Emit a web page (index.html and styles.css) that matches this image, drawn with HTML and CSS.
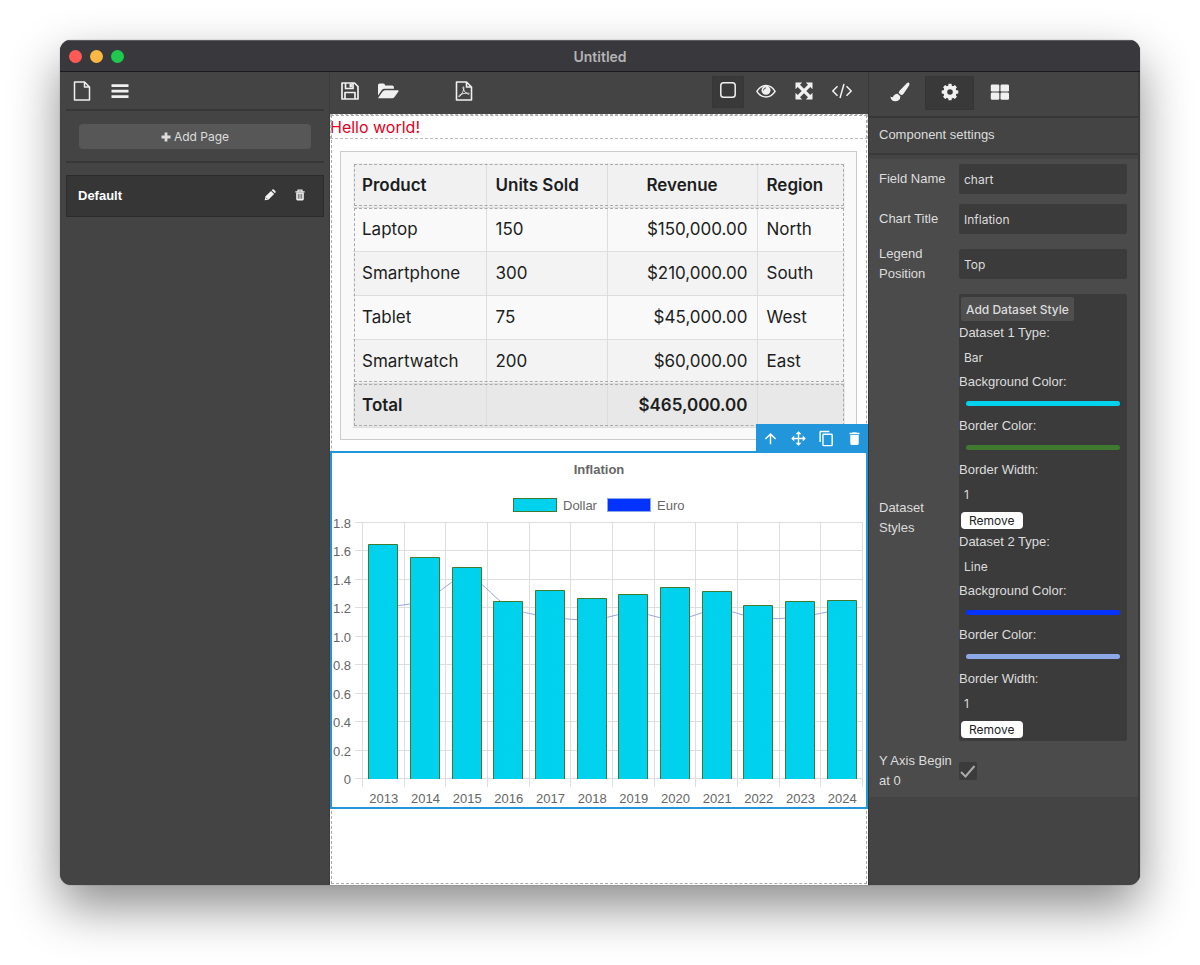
FILE: index.html
```html
<!DOCTYPE html>
<html lang="en">
<head>
  <meta charset="UTF-8">
  <meta name="viewport" content="width=device-width, initial-scale=1.0">
  <title>Untitled</title>
  <link rel="stylesheet" href="styles.css">
</head>
<body>
  <div class="window">
    <header class="titlebar">
      <div class="lights">
        <span class="light light-close"></span>
        <span class="light light-min"></span>
        <span class="light light-max"></span>
      </div>
      <h1>Untitled</h1>
    </header>

    <div class="editor">
      <!-- Pages -->
      <aside class="pages">
        <div class="pages-tools">
          <button class="tool" type="button" aria-label="New document">
            <svg class="icon" viewBox="0 0 20 20"><path d="M2.500 1h10l5 5v13h-15zM12.500 1v5h5" fill="none" stroke="currentColor" stroke-width="1.500" stroke-linejoin="round"/></svg>
          </button>
          <button class="tool" type="button" aria-label="Menu">
            <svg class="icon" viewBox="0 0 20 20"><path d="M1.500 3.200h17v2.900h-17zM1.500 8.700h17v2.900h-17zM1.500 14.200h17v2.900h-17z" fill="currentColor"/></svg>
          </button>
        </div>
        <div class="pages-add">
          <button class="add-page" type="button">
            <svg class="icon-tiny" viewBox="0 0 10 10"><path d="M3.600 .5h2.800v3.100h3.100v2.800H6.400v3.100H3.600V6.400H.5V3.600h3.100z" fill="currentColor"/></svg>
            Add Page
          </button>
        </div>
        <div class="page-item">
          <span class="page-name">Default</span>
          <button class="page-btn" type="button" aria-label="Rename page">
            <svg class="icon-small" viewBox="0 0 12 12"><path d="M.7 11.300l.6-3.700L7 1.900 10.100 5l-5.700 5.700zM7.700 1.200l.7-.7q.8-.5 1.400 0l1.700 1.700q.5.700 0 1.400l-.7.700z" fill="currentColor"/><path d="M1.900 8.700l1.500 1.500" stroke="#363636" stroke-width=".7"/></svg>
          </button>
          <button class="page-btn" type="button" aria-label="Delete page">
            <svg class="icon-small" viewBox="0 0 12 12"><path d="M4 2.500V1.200h4v1.300M1.300 2.900h9.400" fill="none" stroke="currentColor" stroke-width="1.200"/><path d="M2.200 3.500h7.600V10q0 1.400-1.200 1.400H3.400Q2.200 11.400 2.200 10z" fill="currentColor"/><path d="M4.300 4.800v5M6 4.800v5M7.700 4.800v5" stroke="#363636" stroke-width=".7"/></svg>
          </button>
        </div>
      </aside>

      <!-- Canvas -->
      <main class="stage">
        <div class="stage-tools">
          <button class="tool" type="button" aria-label="Save">
            <svg class="icon" viewBox="0 0 20 20"><g fill="none" stroke="currentColor" stroke-width="1.700" stroke-linejoin="round"><path d="M2 2h12.500L18 5.500V18H2zM5 18v-6.500h10V18"/><path d="M5.500 2v5.500h7.500V2"/></g><path d="M9.500 2.500h2.400v4H9.500z" fill="currentColor"/></svg>
          </button>
          <button class="tool" type="button" aria-label="Open">
            <svg class="icon icon-wide" viewBox="0 0 22 20"><path d="M1 14.500V4.200Q1 2.500 2.700 2.500h3.600Q8 2.500 8 4v.6h7.200q1.700 0 1.700 1.700v1.500H7.500q-1.700 0-2.800 1.400zM1.300 16.800l4.200-6q1-1.500 2.500-1.500h12.700q1.500 0 .6 1.400l-3.600 5q-1.100 1.500-2.600 1.500H2Q1 17.400 1.300 16.800z" fill="currentColor"/></svg>
          </button>
          <button class="tool tool-pdf" type="button" aria-label="Export PDF">
            <svg class="icon" viewBox="0 0 20 20"><g fill="none" stroke="currentColor" stroke-linejoin="round"><path d="M2.500 1h10l5 5v13h-15zM12.500 1v5h5" stroke-width="1.600"/><path d="M9.300 5.800q1 0 .5 2.200-.6 2.800-2.700 5.800-1.500 2.200-2.300 1.800-.6-.6 1-1.600 2.600-1.500 6.400-1.900 3-.2 3.100.7-.2.900-2-.1-3.100-1.500-4.100-5-.5-1.800.1-1.900z" stroke-width=".9"/></g></svg>
          </button>
          <span class="spacer"></span>
          <button class="tool tool-active" type="button" aria-label="View components">
            <svg class="icon" viewBox="0 0 20 20"><rect x="2.800" y="1.800" width="14.400" height="14.400" rx="2.800" fill="none" stroke="currentColor" stroke-width="1.500"/></svg>
          </button>
          <button class="tool" type="button" aria-label="Preview">
            <svg class="icon" viewBox="0 0 20 20"><path d="M.9 10.300Q4.500 4.600 10 4.600t9.100 5.700Q15.500 15.900 10 15.900T.9 10.300z" fill="none" stroke="currentColor" stroke-width="1.500"/><circle cx="10" cy="9.300" r="4.500" fill="currentColor"/><path d="M7.500 9.400q0-2.400 2.500-2.600" fill="none" stroke="#444" stroke-width=".9"/></svg>
          </button>
          <button class="tool" type="button" aria-label="Fullscreen">
            <svg class="icon" viewBox="0 0 20 20"><path d="M1.500 1.500h6.700L6 3.700l4 4 4-4-2.200-2.200h6.700v6.700L16.300 6l-4 4 4 4 2.200-2.200v6.700h-6.700l2.200-2.200-4-4-4 4 2.200 2.200H1.500v-6.700L3.700 14l4-4-4-4-2.200 2.200z" fill="currentColor"/></svg>
          </button>
          <button class="tool" type="button" aria-label="View code">
            <svg class="icon" viewBox="0 0 20 20"><path d="M5.500 5.200L.8 10l4.700 4.800M14.500 5.200l4.700 4.800-4.700 4.800M12 3L8 17" fill="none" stroke="currentColor" stroke-width="1.500"/></svg>
          </button>
        </div>

        <div class="canvas">
          <p class="hello">Hello world!</p>

          <div class="table-box">
            <table class="sales">
              <colgroup>
                <col class="col-product">
                <col class="col-units">
                <col class="col-revenue">
                <col class="col-region">
              </colgroup>
              <thead>
                <tr><th>Product</th><th>Units Sold</th><th class="center">Revenue</th><th>Region</th></tr>
              </thead>
              <tbody>
                <tr><td>Laptop</td><td>150</td><td class="money">$150,000.00</td><td>North</td></tr>
                <tr><td>Smartphone</td><td>300</td><td class="money">$210,000.00</td><td>South</td></tr>
                <tr><td>Tablet</td><td>75</td><td class="money">$45,000.00</td><td>West</td></tr>
                <tr><td>Smartwatch</td><td>200</td><td class="money">$60,000.00</td><td>East</td></tr>
              </tbody>
              <tfoot>
                <tr><td>Total</td><td></td><td class="money">$465,000.00</td><td></td></tr>
              </tfoot>
            </table>
          </div>

          <div class="chart-box">
            <div class="chart-tools">
              <button type="button" aria-label="Select parent"><svg viewBox="0 0 24 24"><path d="M13,20H11V8L5.500,13.500L4.080,12.080L12,4.160L19.920,12.080L18.500,13.500L13,8V20Z" fill="currentColor"/></svg></button>
              <button type="button" aria-label="Move"><svg viewBox="0 0 24 24"><path d="M13,6V11H18V7.750L22.250,12L18,16.250V13H13V18H16.250L12,22.250L7.750,18H11V13H6V16.250L1.750,12L6,7.750V11H11V6H7.750L12,1.750L16.250,6H13Z" fill="currentColor"/></svg></button>
              <button type="button" aria-label="Duplicate"><svg viewBox="0 0 24 24"><path d="M19,21H8V7H19M19,5H8A2,2 0 0,0 6,7V21A2,2 0 0,0 8,23H19A2,2 0 0,0 21,21V7A2,2 0 0,0 19,5M16,1H4A2,2 0 0,0 2,3V17H4V3H16V1Z" fill="currentColor"/></svg></button>
              <button type="button" aria-label="Delete"><svg viewBox="0 0 24 24"><path d="M19,4H15.500L14.500,3H9.500L8.500,4H5V6H19M6,19A2,2 0 0,0 8,21H16A2,2 0 0,0 18,19V7H6V19Z" fill="currentColor"/></svg></button>
            </div>
            <svg class="chart" id="chart" viewBox="0 0 534 354" role="img" aria-label="Inflation"></svg>
          </div>
        </div>
      </main>

      <!-- Settings -->
      <aside class="settings">
        <div class="settings-tabs">
          <button class="tab" type="button" aria-label="Styles">
            <svg class="icon" viewBox="0 0 20 20"><path d="M18.900.7q1.200 1-.1 3.300l-5.200 7.700q-1.100 1.500-2.500 1.400L8.700 11q0-1.300 1.100-2.500l6.700-7Q17.900.2 18.900.7zM7.600 11.700l2.700 2.500q.2 5.100-5.300 5.100-4 0-4.600-4.700 1.600 1.200 2.500.5 1.200-3.300 4.700-3.400z" fill="currentColor"/></svg>
          </button>
          <button class="tab tab-active" type="button" aria-label="Settings">
            <svg class="icon" viewBox="-10 -10 20 20"><g fill="currentColor"><path id="tooth" d="M-2 -5l.5-3.300h3l.5 3.300zM-2 5l.5 3.300h3l.5-3.300z"/><use href="#tooth" transform="rotate(45)"/><use href="#tooth" transform="rotate(90)"/><use href="#tooth" transform="rotate(135)"/></g><circle r="4.700" fill="none" stroke="currentColor" stroke-width="3.800"/></svg>
          </button>
          <button class="tab" type="button" aria-label="Blocks">
            <svg class="icon" viewBox="0 0 20 20"><g fill="currentColor"><rect x=".8" y="2.400" width="8.500" height="7.200" rx="1.300"/><rect x="10.500" y="2.400" width="8.500" height="7.200" rx="1.300"/><rect x=".8" y="10.600" width="8.500" height="7.200" rx="1.300"/><rect x="10.500" y="10.600" width="8.500" height="7.200" rx="1.300"/></g></svg>
          </button>
        </div>
        <h2>Component settings</h2>

        <form class="traits">
          <div class="trait">
            <label for="fieldName">Field Name</label>
            <input class="field" type="text" id="fieldName" value="chart">
          </div>
          <div class="trait">
            <label for="chartTitle">Chart Title</label>
            <input class="field" type="text" id="chartTitle" value="Inflation">
          </div>
          <div class="trait">
            <label for="legendPosition">Legend Position</label>
            <select class="field" id="legendPosition">
              <option>Top</option>
              <option>Bottom</option>
            </select>
          </div>
          <div class="trait">
            <span class="trait-label" id="datasetLabel">Dataset Styles</span>
            <div class="datasets" role="group" aria-labelledby="datasetLabel">
              <div class="dataset-add"><button type="button">Add Dataset Style</button></div>
              <div class="dataset">
                <label for="type1">Dataset 1 Type:</label>
                <select class="field" id="type1"><option>Bar</option><option>Line</option></select>
                <label for="bg1">Background Color:</label>
                <input class="color" type="color" id="bg1" value="#00d2ee">
                <label for="border1">Border Color:</label>
                <input class="color" type="color" id="border1" value="#3f7a30">
                <label for="width1">Border Width:</label>
                <input class="field" type="text" inputmode="numeric" id="width1" value="1">
                <div class="dataset-remove"><button type="button">Remove</button></div>
              </div>
              <div class="dataset">
                <label for="type2">Dataset 2 Type:</label>
                <select class="field" id="type2"><option>Line</option><option>Bar</option></select>
                <label for="bg2">Background Color:</label>
                <input class="color" type="color" id="bg2" value="#0433ff">
                <label for="border2">Border Color:</label>
                <input class="color" type="color" id="border2" value="#8da8e6">
                <label for="width2">Border Width:</label>
                <input class="field" type="text" inputmode="numeric" id="width2" value="1">
                <div class="dataset-remove"><button type="button">Remove</button></div>
              </div>
            </div>
          </div>
          <div class="trait">
            <label for="beginAtZero">Y Axis Begin at 0</label>
            <span class="check">
              <input type="checkbox" id="beginAtZero" checked>
              <svg viewBox="0 0 18 18"><path d="M2 10l4.500 4.500L15.500 4" fill="none" stroke="#aaa" stroke-width="2"/></svg>
            </span>
          </div>
        </form>
      </aside>
    </div>
  </div>

  <script src="chart.js"></script>
</body>
</html>
```

FILE: styles.css
```css
* {
  box-sizing: border-box;
}

body {
  margin: 0;
  padding: 40px 60px 80px;
  background: #fff;
  font-family: "Liberation Sans", Arial, sans-serif;
  font-size: 13px;
  line-height: 19px;
  color: #ddd;
}

h1, h2, p {
  margin: 0;
}

button, input, select {
  margin: 0;
  padding: 0;
  border: none;
  background: none;
  color: inherit;
  font-family: Inter, "Liberation Sans", sans-serif;
  font-size: 13px;
}

button {
  cursor: pointer;
}

svg {
  display: block;
}

.window {
  display: flex;
  flex-direction: column;
  min-height: calc(100vh - 120px);
  background: #444;
  border-radius: 11px;
  overflow: hidden;
  box-shadow: 0 0 1px rgba(0, 0, 0, 0.6), 0 22px 50px rgba(0, 0, 0, 0.45);
}

/* Title bar */
.titlebar {
  display: grid;
  grid-template-columns: 1fr auto 1fr;
  align-items: center;
  height: 32px;
  padding: 0 9px;
  background: #39383c;
  border-top: 1px solid #5c5c5e;
  border-bottom: 1px solid #1c1c1e;
}

.titlebar h1 {
  font-family: Inter, sans-serif;
  font-size: 14px;
  font-weight: 600;
  color: #b4b3b6;
}

.lights {
  display: flex;
  gap: 8px;
}

.light {
  width: 13px;
  height: 13px;
  border-radius: 50%;
}

.light-close { background: #ff5a56; }
.light-min { background: #fdb843; }
.light-max { background: #1fc84f; }

.editor {
  flex: 1;
  display: grid;
  grid-template-columns: 270px 1fr 272px;
}

.icon {
  width: 20px;
  height: 20px;
}

.icon-wide {
  width: 22px;
}

.icon-small {
  width: 12px;
  height: 12px;
}

.icon-tiny {
  width: 10px;
  height: 10px;
}

.tool {
  display: flex;
  justify-content: center;
  align-items: center;
  width: 32px;
  height: 32px;
  padding-bottom: 2px;
  color: #f0f0f0;
}

.tool-active {
  background: #393939;
  box-shadow: inset 0 0 1px #222;
}

/* Pages */
.pages {
  padding: 0 6px;
}

.pages-tools {
  display: flex;
  gap: 6px;
  height: 39px;
  padding-top: 4px;
  border-bottom: 2px solid #373737;
}

.pages-add {
  padding: 13px 13px 12px;
  border-bottom: 2px solid #373737;
}

.add-page {
  display: flex;
  justify-content: center;
  align-items: center;
  gap: 3px;
  width: 100%;
  height: 25px;
  border-radius: 4px;
  background: #575757;
  font-size: 12px;
}

.page-item {
  display: flex;
  align-items: center;
  gap: 6px;
  height: 42px;
  margin-top: 12px;
  padding: 0 11px 2px;
  background: #363636;
  border: 1px solid #2c2c2c;
}

.page-name {
  flex: 1;
  font-weight: bold;
  color: #fff;
}

.page-btn {
  display: flex;
  justify-content: center;
  align-items: center;
  width: 24px;
  height: 24px;
  color: #f0f0f0;
}

/* Canvas */
.stage {
  display: flex;
  flex-direction: column;
  min-width: 0;
  border-left: 1px solid #3c3c3c;
  margin-left: -1px;
}

.stage-tools {
  display: flex;
  gap: 6px;
  height: 42px;
  padding: 4px 10px 0 4px;
}

.tool-pdf {
  margin-left: 38px;
}

.spacer {
  flex: 1;
}

.canvas {
  flex: 1;
  background: #fff;
  color: #1c1e21;
  font-family: Inter, sans-serif;
  font-size: 17px;
  outline: 1px dashed #aaa;
  outline-offset: -2px;
}

.hello {
  height: 25px;
  line-height: 26px;
  font-size: 16px;
  color: #e3001b;
  outline: 1px dashed #bbb;
  outline-offset: -1px;
}

.table-box {
  margin: 12px 11px 11px 10px;
  padding: 11px 11px 11px 12px;
  background: #f9f9f9;
  border: 1px solid #ccc;
}

.sales {
  width: 100%;
  table-layout: fixed;
  border-collapse: collapse;
}

.col-product { width: 133px; }
.col-units { width: 121px; }
.col-revenue { width: 150px; }

.sales thead,
.sales tbody,
.sales tfoot {
  outline: 1px dashed #aaa;
  outline-offset: -2px;
}

.sales th,
.sales td {
  height: 44px;
  padding: 0 9px;
  border-right: 1px solid #ddd;
  border-bottom: 1px solid #ddd;
  text-align: left;
  line-height: 24px;
  white-space: nowrap;
}

.sales th:last-child,
.sales td:last-child {
  border-right: none;
}

.sales th {
  background: #f1f1f1;
  font-weight: 600;
}

.sales tbody tr:nth-child(even) {
  background: #f3f3f3;
}

.sales tfoot td {
  background: #e8e8e8;
  font-weight: 600;
}

.sales .center {
  text-align: center;
}

.sales .money {
  text-align: right;
}

.chart-box {
  position: relative;
  border: 2px solid #2196db;
}

.chart-tools {
  position: absolute;
  right: -2px;
  bottom: 100%;
  display: flex;
  height: 29px;
  background: #2196db;
  color: #fff;
}

.chart-tools button {
  display: flex;
  justify-content: center;
  align-items: center;
  width: 28px;
}

.chart-tools svg {
  width: 17px;
  height: 17px;
}

.chart {
  width: 100%;
}

.chart text {
  font-family: "Liberation Sans", Arial, sans-serif;
  font-size: 13px;
  fill: #666;
}

.chart .chart-title {
  font-weight: bold;
}

.chart .grid {
  stroke: #dedede;
}

.chart .line {
  fill: none;
  stroke: #9aa5dc;
}

.chart .bar,
.chart .key-bar {
  fill: #00d2ee;
  stroke: #3f7a30;
}

.chart .key-line {
  fill: #0433ff;
  stroke: #8da8e6;
}

.middle {
  text-anchor: middle;
}

.end {
  text-anchor: end;
}

/* Settings */
.settings {
  border-left: 1px solid #383838;
  border-right: 2px solid #3a3a3a;
}

.settings-tabs {
  display: flex;
  gap: 1px;
  height: 46px;
  padding: 4px 6px 0;
  border-bottom: 2px solid #373737;
}

.tab {
  display: flex;
  justify-content: center;
  align-items: center;
  width: 49px;
  height: 34px;
  padding-bottom: 3px;
  color: #f0f0f0;
}

.tab-active {
  background: #393939;
  box-shadow: inset 0 0 1px #222;
}

.settings h2 {
  height: 37px;
  padding: 7px 10px;
  border-bottom: 2px solid #393939;
  font-size: 13px;
  font-weight: normal;
}

.traits {
  margin-top: 4px;
  padding-bottom: 1px;
  background: #4b4b4b;
}

.trait {
  display: grid;
  grid-template-columns: 75px 1fr;
  gap: 5px;
  align-items: center;
  padding: 5px 11px 5px 10px;
  line-height: 20px;
}

.field {
  display: block;
  width: 100%;
  height: 30px;
  padding: 0 5px;
  background: #3b3b3b;
  border-radius: 2px;
  appearance: none;
  font-size: 12px;
}

.datasets {
  background: #3b3b3b;
  border-radius: 2px;
}

.dataset-add {
  height: 29px;
  padding: 3px 2px;
}

.dataset-add button {
  display: block;
  height: 24px;
  padding: 0 5px;
  background: #4f4f4f;
  border-radius: 2px;
  font-size: 12px;
  font-weight: 500;
}

.dataset label {
  display: block;
  line-height: 19px;
}

.color {
  display: block;
  width: 100%;
  height: 25px;
  padding: 10px 7px;
  appearance: none;
}

.color::-webkit-color-swatch-wrapper {
  padding: 0;
}

.color::-webkit-color-swatch {
  border: none;
  border-radius: 3px;
}

.dataset-remove {
  height: 23px;
  padding: 3px 2px;
}

.dataset-remove button {
  display: block;
  height: 17px;
  padding: 0 8px;
  background: #fff;
  border-radius: 4px;
  color: #222;
  font-size: 12px;
}

.check {
  position: relative;
  width: 18px;
  height: 18px;
}

.check input {
  display: block;
  width: 18px;
  height: 18px;
  background: #3b3b3b;
  border-radius: 2px;
  appearance: none;
}

.check svg {
  position: absolute;
  inset: 0;
  visibility: hidden;
  pointer-events: none;
}

.check input:checked + svg {
  visibility: visible;
}
```

FILE: chart.js
```js
const years = [2013, 2014, 2015, 2016, 2017, 2018, 2019, 2020, 2021, 2022, 2023, 2024];
const dollar = [1.65, 1.56, 1.49, 1.25, 1.33, 1.27, 1.30, 1.35, 1.32, 1.22, 1.25, 1.26];
const euro = [1.21, 1.26, 1.42, 1.21, 1.14, 1.12, 1.17, 1.12, 1.19, 1.13, 1.14, 1.19];

// plot area inside the viewBox
const left = 31;
const right = 531;
const top_ = 70;
const bottom = 326;
const max = 1.8;
const step = (right - left) / years.length;
const barWidth = 29;

const yOf = value => bottom - (value / max) * (bottom - top_);
const xOf = index => left + step * (index + 0.5);

let html = '<text class="chart-title middle" x="267" y="21">Inflation</text>';

// Legend
html += '<rect class="key-bar" x="181.5" y="45.5" width="43" height="13"/><text x="231" y="57">Dollar</text>';
html += '<rect class="key-line" x="275.5" y="45.5" width="43" height="13"/><text x="325" y="57">Euro</text>';

// Grid and axis labels
for (let i = 0; i <= 9; i++) {
  const y = Math.round(yOf(i * 0.2)) - 0.5;
  const label = i === 0 ? '0' : (i * 0.2).toFixed(1);
  html += `<path class="grid" d="M${left - 8} ${y}H${right}"/>`;
  html += `<text class="end" x="19" y="${y + 5}">${label}</text>`;
}
for (let i = 0; i <= years.length; i++) {
  const x = Math.round(left + step * i) - 0.5;
  html += `<path class="grid" d="M${x} ${top_}V${bottom + 8}"/>`;
}
years.forEach((year, i) => {
  html += `<text class="middle" x="${xOf(i)}" y="350">${year}</text>`;
});

// Euro line, smoothed through its neighbours
let path = `M${xOf(0)} ${yOf(euro[0])}`;
for (let i = 1; i < euro.length; i++) {
  const before = euro[Math.max(i - 2, 0)];
  const after = euro[Math.min(i + 1, euro.length - 1)];
  const c1 = euro[i - 1] + (euro[i] - before) / 6;
  const c2 = euro[i] - (after - euro[i - 1]) / 6;
  path += `C${xOf(i - 1) + step / 3} ${yOf(c1)} ${xOf(i) - step / 3} ${yOf(c2)} ${xOf(i)} ${yOf(euro[i])}`;
}
html += `<path class="line" d="${path}"/>`;

// Dollar bars
dollar.forEach((value, i) => {
  const x = Math.round(xOf(i) - barWidth / 2) - 0.5;
  const y = Math.round(yOf(value)) + 0.5;
  html += `<path class="bar" d="M${x} ${bottom}V${y}h${barWidth}V${bottom}"/>`;
});

document.getElementById('chart').innerHTML = html;
```
